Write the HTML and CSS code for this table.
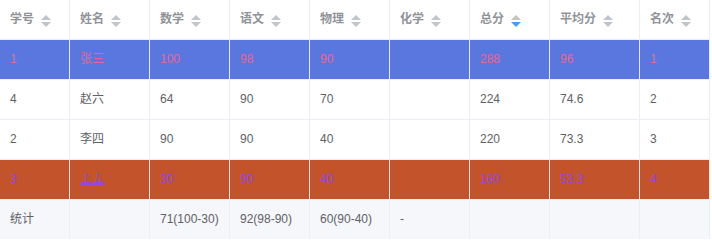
FILE: index.html
```html
<!DOCTYPE html>
<html lang="zh">
<head>
<meta charset="utf-8">
<link rel="stylesheet" href="styles.css">
</head>
<body>
<table class="grid">
  <colgroup>
    <col class="w70"><col class="w80"><col class="w80"><col class="w80"><col class="w80"><col class="w80"><col class="w80"><col class="w90"><col class="w70">
  </colgroup>
  <thead>
    <tr>
      <th><div class="cell">学号<span class="sort"><i class="up"></i><i class="down"></i></span></div></th>
      <th><div class="cell">姓名<span class="sort"><i class="up"></i><i class="down"></i></span></div></th>
      <th><div class="cell">数学<span class="sort"><i class="up"></i><i class="down"></i></span></div></th>
      <th><div class="cell">语文<span class="sort"><i class="up"></i><i class="down"></i></span></div></th>
      <th><div class="cell">物理<span class="sort"><i class="up"></i><i class="down"></i></span></div></th>
      <th><div class="cell">化学<span class="sort"><i class="up"></i><i class="down"></i></span></div></th>
      <th><div class="cell">总分<span class="sort"><i class="up"></i><i class="down active"></i></span></div></th>
      <th><div class="cell">平均分<span class="sort"><i class="up"></i><i class="down"></i></span></div></th>
      <th><div class="cell">名次<span class="sort"><i class="up"></i><i class="down"></i></span></div></th>
    </tr>
  </thead>
  <tbody>
    <tr class="hl-blue">
      <td><div class="cell">1</div></td>
      <td><div class="cell">张三</div></td>
      <td><div class="cell">100</div></td>
      <td><div class="cell">98</div></td>
      <td><div class="cell">90</div></td>
      <td><div class="cell"></div></td>
      <td><div class="cell">288</div></td>
      <td><div class="cell">96</div></td>
      <td><div class="cell">1</div></td>
    </tr>
    <tr>
      <td><div class="cell">4</div></td>
      <td><div class="cell">赵六</div></td>
      <td><div class="cell">64</div></td>
      <td><div class="cell">90</div></td>
      <td><div class="cell">70</div></td>
      <td><div class="cell"></div></td>
      <td><div class="cell">224</div></td>
      <td><div class="cell">74.6</div></td>
      <td><div class="cell">2</div></td>
    </tr>
    <tr>
      <td><div class="cell">2</div></td>
      <td><div class="cell">李四</div></td>
      <td><div class="cell">90</div></td>
      <td><div class="cell">90</div></td>
      <td><div class="cell">40</div></td>
      <td><div class="cell"></div></td>
      <td><div class="cell">220</div></td>
      <td><div class="cell">73.3</div></td>
      <td><div class="cell">3</div></td>
    </tr>
    <tr class="hl-orange">
      <td><div class="cell">3</div></td>
      <td><div class="cell"><a class="name-link">王五</a></div></td>
      <td><div class="cell">30</div></td>
      <td><div class="cell">90</div></td>
      <td><div class="cell">40</div></td>
      <td><div class="cell"></div></td>
      <td><div class="cell">160</div></td>
      <td><div class="cell">53.3</div></td>
      <td><div class="cell">4</div></td>
    </tr>
  </tbody>
  <tfoot>
    <tr>
      <td><div class="cell">统计</div></td>
      <td><div class="cell"></div></td>
      <td><div class="cell">71(100-30)</div></td>
      <td><div class="cell">92(98-90)</div></td>
      <td><div class="cell">60(90-40)</div></td>
      <td><div class="cell">-</div></td>
      <td><div class="cell"></div></td>
      <td><div class="cell"></div></td>
      <td><div class="cell"></div></td>
    </tr>
  </tfoot>
</table>
</body>
</html>
```
FILE: styles.css
```css
html, body {
  margin: 0;
  padding: 0;
  background: #ffffff;
}

body {
  font-family: "Liberation Sans", "Noto Sans CJK SC", Arial, sans-serif;
  font-size: 12px;
  color: #606266;
}

.grid {
  border-collapse: separate;
  border-spacing: 0;
  table-layout: fixed;
  width: 710px;
}

.w70 { width: 70px; }
.w80 { width: 80px; }
.w90 { width: 90px; }

.grid th,
.grid td {
  padding: 0;
  text-align: left;
  border-right: 1px solid #ebeef5;
  border-bottom: 1px solid #ebeef5;
  box-sizing: border-box;
  vertical-align: middle;
}

.cell {
  height: 39px;
  line-height: 39px;
  padding: 0 10px;
  white-space: nowrap;
  overflow: hidden;
  display: flex;
  align-items: center;
}

.grid th {
  color: #909399;
  font-weight: bold;
  background: #ffffff;
}

.sort {
  display: inline-flex;
  flex-direction: column;
  align-items: center;
  justify-content: center;
  width: 10px;
  height: 14px;
  margin-left: 7px;
  margin-top: 2px;
  gap: 2px;
}

.sort i {
  display: block;
  width: 0;
  height: 0;
  border-left: 5px solid transparent;
  border-right: 5px solid transparent;
}

.sort .up {
  border-bottom: 5px solid #c0c4cc;
}

.sort .down {
  border-top: 5px solid #c0c4cc;
}

.sort .down.active {
  border-top-color: #409eff;
}

.hl-blue td {
  background: #5a77e0;
  color: #e8688c;
}

.hl-orange td {
  background: #c3532a;
  color: #8b4be6;
}

.name-link {
  color: #8b4be6;
  text-decoration: underline;
}

.grid tfoot td {
  background: #f5f7fa;
  color: #606266;
  border-bottom: none;
}
```
